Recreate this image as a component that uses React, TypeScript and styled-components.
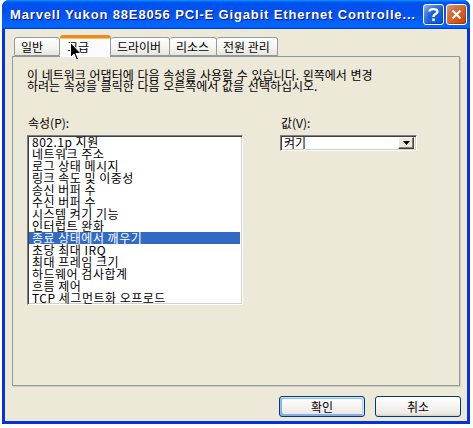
import { createGlobalStyle, styled } from 'styled-components';

const GlobalStyle = createGlobalStyle`
    html, body {
        margin: 0;
        padding: 0;
        background: #ffffff;
    }
    * {
        box-sizing: border-box;
    }
`;

const korean = `"Noto Sans CJK KR", "Noto Sans", sans-serif`;

const Window = styled.div`
    position: relative;
    width: 468px;
    height: 424px;
    margin-left: 2px;
    display: flex;
    flex-direction: column;
    background: #0831d9;
    border-radius: 7px 7px 0 0;
    padding: 0 3px 3px;
    font-family: ${korean};
    font-size: 12px;
    color: #000;
`;

const TitleBar = styled.div`
    height: 29px;
    margin: 0 -3px;
    padding: 0 3px 0 7px;
    display: flex;
    align-items: center;
    border-radius: 7px 7px 0 0;
    background: linear-gradient(
        180deg,
        #0997ff,
        #0053ee 8%,
        #0050ee 40%,
        #06f 88%,
        #06f 93%,
        #005bff 95%,
        #003dd7 96%,
        #003dd7
    );
`;

const TitleText = styled.div`
    flex: 1;
    padding-left: 1px;
    color: #fff;
    font-family: 'Liberation Sans', Arial, sans-serif;
    font-weight: bold;
    font-size: 13px;
    letter-spacing: 0.85px;
    text-shadow: 1px 1px #0f1089;
    white-space: nowrap;
    overflow: hidden;
`;

const CaptionButton = styled.div<{ $close?: boolean }>`
    width: 21px;
    height: 21px;
    margin-left: 2px;
    border: 1px solid #fff;
    border-radius: 3px;
    display: flex;
    align-items: center;
    justify-content: center;
    background: ${(p) =>
        p.$close
            ? 'radial-gradient(circle at 90% 90%, #cc4600 0%, #dc6527 55%, #cd7546 70%, #e39f7b 100%)'
            : 'radial-gradient(circle at 90% 90%, #0054e9 0%, #2263d5 55%, #4479e4 70%, #a3bbec 100%)'};
    box-shadow: inset -1px -1px 1px rgba(0, 0, 0, 0.25);
`;

const Content = styled.div`
    flex: 1;
    background: #ece9d8;
    padding: 6px 6px 0 7px;
    display: flex;
    flex-direction: column;
`;

const TabStrip = styled.div`
    display: flex;
    height: 21px;
    padding-left: 2px;
    position: relative;
    z-index: 1;
`;

const Tab = styled.div<{ $width: number; $active?: boolean }>`
    width: ${(p) => p.$width}px;
    height: ${(p) => (p.$active ? 22 : 19)}px;
    margin-top: ${(p) => (p.$active ? 0 : 2)}px;
    padding-left: ${(p) => (p.$active ? 7 : 6)}px;
    line-height: 18px;
    border: 1px solid #919b9c;
    border-bottom: ${(p) => (p.$active ? 'none' : '1px solid #919b9c')};
    border-top: ${(p) => (p.$active ? '3px solid #e68b2c' : '1px solid #919b9c')};
    border-radius: 3px 3px 0 0;
    background: ${(p) =>
        p.$active ? '#fcfcfe' : 'linear-gradient(180deg, #fff, #f3f3ef 60%, #e6e5de)'};
    box-shadow: ${(p) => (p.$active ? 'inset 0 1px #ffc73c' : 'none')};
    white-space: nowrap;
    & + & {
        border-left: ${(p) => (p.$active ? '1px solid #919b9c' : 'none')};
    }
`;

const Panel = styled.div`
    width: 448px;
    height: 330px;
    border: 1px solid #919b9c;
    box-shadow: 1px 1px 0 #d0cebf;
    padding: 12px 14px 0;
    display: flex;
    flex-direction: column;
`;

const Description = styled.p`
    margin: 0;
    line-height: 11px;
    word-spacing: 1px;
`;

const Fields = styled.div`
    margin-top: 26px;
    display: grid;
    grid-template-columns: 216px 137px;
    column-gap: 37px;
    align-items: start;
`;

const Field = styled.div`
    display: flex;
    flex-direction: column;
`;

const Label = styled.div`
    padding-left: 1px;
    line-height: 12px;
    height: 18px;
`;

const ListBox = styled.div`
    height: 170px;
    border: 1px solid;
    border-color: #808080 #fff #fff #808080;
    background: #fff;
    box-shadow: inset 1px 1px #404040, inset -1px -1px #d4d0c8;
    padding: 0 2px 0 1px;
`;

const ListItem = styled.div<{ $selected?: boolean }>`
    height: 12px;
    line-height: 12px;
    padding-left: 3px;
    letter-spacing: 0.5px;
    white-space: nowrap;
    background: ${(p) => (p.$selected ? '#316ac5' : 'transparent')};
    color: ${(p) => (p.$selected ? '#fff' : '#000')};
`;

const Combo = styled.div`
    height: 16px;
    display: flex;
    align-items: center;
    border: 1px solid;
    border-color: #808080 #fff #fff #808080;
    background: #fff;
    box-shadow: inset 1px 1px #404040, inset -1px -1px #d4d0c8;
    padding: 2px 2px 2px 3px;
`;

const ComboText = styled.div`
    flex: 1;
    line-height: 12px;
`;

const DropButton = styled.div`
    width: 16px;
    height: 12px;
    display: flex;
    align-items: center;
    justify-content: center;
    background: #ece9d8;
    border: 1px solid;
    border-color: #fff #404040 #404040 #fff;
    box-shadow: inset -1px -1px #808080;
`;

const ButtonRow = styled.div`
    display: flex;
    justify-content: flex-end;
    gap: 10px;
    margin-top: 10px;
`;

const Button = styled.div<{ $default?: boolean }>`
    width: 86px;
    height: 21px;
    border: 1px solid #003c74;
    border-radius: 3px;
    display: flex;
    align-items: center;
    justify-content: center;
    line-height: 12px;
    background: linear-gradient(180deg, #fff, #ecebe6 86%, #d6d0c5);
    box-shadow: ${(p) =>
        p.$default
            ? 'inset -1px 1px #cee7ff, inset 1px 2px #98b8ea, inset -2px 2px #bcd4f6, inset 1px -1px #89ade4, inset 2px -2px #89ade4'
            : 'none'};
`;

const Cursor = styled.svg`
    position: absolute;
    display: block;
    z-index: 5;
    left: 68px;
    top: 42px;
    width: 12px;
    height: 19px;
`;

const tabs = [
    { label: '일반', width: 46 },
    { label: '고급', width: 51, active: true },
    { label: '드라이버', width: 59 },
    { label: '리소스', width: 47 },
    { label: '전원 관리', width: 61 },
];

const properties = [
    '802.1p 지원',
    '네트워크 주소',
    '로그 상태 메시지',
    '링크 속도 및 이중성',
    '송신 버퍼 수',
    '수신 버퍼 수',
    '시스템 켜기 기능',
    '인터럽트 완화',
    '종료 상태에서 깨우기',
    '초당 최대 IRQ',
    '최대 프레임 크기',
    '하드웨어 검사합계',
    '흐름 제어',
    'TCP 세그먼트화 오프로드',
];

const App = () => {
    return (
        <>
            <GlobalStyle />
            <Window>
                <TitleBar>
                    <TitleText>
                        Marvell Yukon 88E8056 PCI-E Gigabit Ethernet Controlle...
                    </TitleText>
                    <CaptionButton>
                        <svg width="13" height="15" viewBox="0 0 13 15">
                            <path
                                d="M2.5 4.5 C2.5 1.5 10.5 1.2 10.5 4.5 C10.5 7 6.5 7 6.5 9.5 L6.5 10"
                                fill="none"
                                stroke="#fff"
                                strokeWidth="2.4"
                            />
                            <rect x="5.2" y="11.5" width="2.6" height="2.6" fill="#fff" />
                        </svg>
                    </CaptionButton>
                    <CaptionButton $close>
                        <svg width="13" height="13" viewBox="0 0 13 13">
                            <path
                                d="M2.5 2.5 L10.5 10.5 M10.5 2.5 L2.5 10.5"
                                stroke="#fff"
                                strokeWidth="2.2"
                            />
                        </svg>
                    </CaptionButton>
                </TitleBar>
                <Content>
                    <TabStrip>
                        {tabs.map((tab) => (
                            <Tab key={tab.label} $width={tab.width} $active={tab.active}>
                                {tab.label}
                            </Tab>
                        ))}
                    </TabStrip>
                    <Panel>
                        <Description>
                            이 네트워크 어댑터에 다음 속성을 사용할 수 있습니다. 왼쪽에서 변경
                            <br />
                            하려는 속성을 클릭한 다음 오른쪽에서 값을 선택하십시오.
                        </Description>
                        <Fields>
                            <Field>
                                <Label>속성(P):</Label>
                                <ListBox>
                                    {properties.map((name, index) => (
                                        <ListItem key={name} $selected={index === 8}>
                                            {name}
                                        </ListItem>
                                    ))}
                                </ListBox>
                            </Field>
                            <Field>
                                <Label>값(V):</Label>
                                <Combo>
                                    <ComboText>켜기</ComboText>
                                    <DropButton>
                                        <svg width="7" height="4" viewBox="0 0 7 4">
                                            <path d="M0 0 H7 L3.5 4 Z" fill="#000" />
                                        </svg>
                                    </DropButton>
                                </Combo>
                            </Field>
                        </Fields>
                    </Panel>
                    <ButtonRow>
                        <Button $default>확인</Button>
                        <Button>취소</Button>
                    </ButtonRow>
                </Content>
                <Cursor viewBox="0 0 12 19">
                    <path
                        d="M0.5 0.5 L0.5 15.5 L4 12 L6.5 18 L8.5 17 L6 11.5 L11 11.5 Z"
                        fill="#000"
                        stroke="#fff"
                        strokeWidth="1"
                    />
                </Cursor>
            </Window>
        </>
    );
};

export default App;
